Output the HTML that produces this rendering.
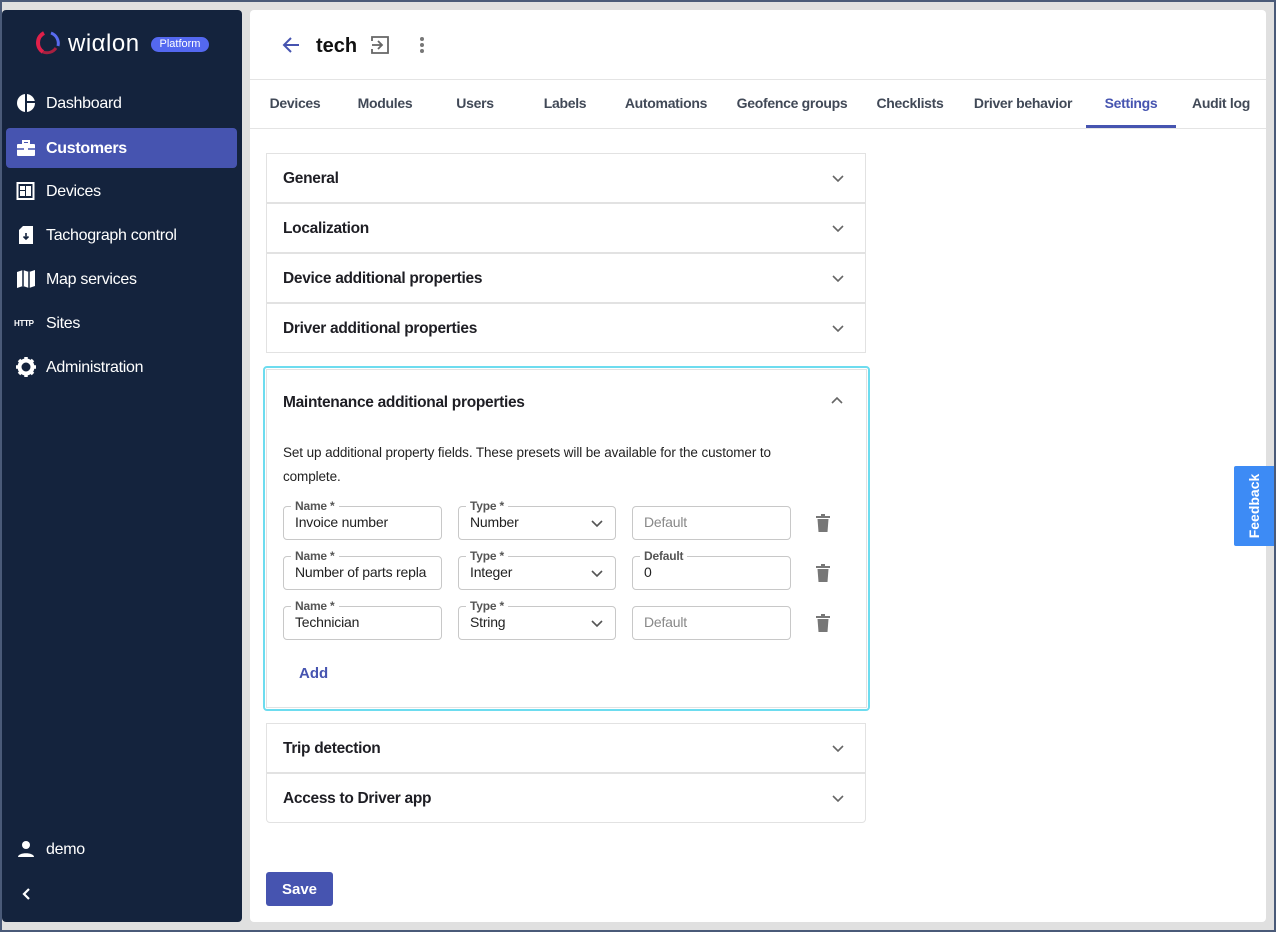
<!DOCTYPE html>
<html><head><meta charset="utf-8"><style>
*{box-sizing:border-box;margin:0;padding:0}
body{width:1276px;height:932px;background:#4a5a78;font-family:"Liberation Sans",sans-serif;position:relative;overflow:hidden}
.frame{position:absolute;left:2px;top:2px;width:1272px;height:928px;background:#e0e0e0}
.side{position:absolute;left:2px;top:10px;width:240px;height:912px;background:#14233d;border-radius:4px;color:#fff}
.nav{position:absolute;left:4px;width:231px;height:40px;font-size:16px;letter-spacing:-0.3px;display:flex;align-items:center;padding-left:40px;padding-top:2px}
.nav svg{position:absolute;left:10px;top:10px}
.act{background:#4654b0;border-radius:4px;font-weight:bold}
.main{position:absolute;left:250px;top:10px;width:1016px;height:912px;background:#fff;border-radius:4px}
.abs{position:absolute}
.tab{position:absolute;top:85px;font-size:14px;font-weight:bold;color:#414957;transform:translateX(-50%);white-space:nowrap;letter-spacing:-0.3px}
.acc{position:absolute;left:16px;width:600px;height:50px;border:1px solid #e2e2e2;background:#fff}
.acc span{position:absolute;left:16px;top:16px;font-size:15.5px;font-weight:bold;color:#1e1e24;letter-spacing:-0.3px}
.chev{position:absolute;right:20px;top:17px}
.fld{position:absolute;height:34px;border:1px solid #c8c8c8;border-radius:4px;font-size:14px;color:#222;padding:7px 11px;white-space:nowrap;overflow:hidden;letter-spacing:-0.2px}
.lbl{position:absolute;font-size:12px;font-weight:bold;color:#555;background:#fff;padding:0 4px;letter-spacing:-0.2px}
.ph{color:#888}
</style></head><body>
<div class="frame"></div>
<div class="side">
 <svg class="abs" style="left:32px;top:20px" width="30" height="26" viewBox="0 0 30 26"><path d="M10 3 A11 11 0 0 0 9 22" stroke="#e0204a" stroke-width="4" fill="none"/><path d="M9 22 A11 11 0 0 0 22 18" stroke="#a82040" stroke-width="3" fill="none"/><path d="M17 3 A11 11 0 0 1 24 16" stroke="#5a6cf0" stroke-width="3" fill="none"/></svg>
 <div class="abs" style="left:66px;top:20px;font-size:24px;color:#fff;letter-spacing:0.5px">wiαlon</div>
 <div class="abs" style="left:149px;top:27px;width:58px;height:15px;border-radius:8px;background:#5468f0;color:#fff;font-size:11px;text-align:center;line-height:15px">Platform</div>
 <div class="nav" style="top:73px"><svg width="20" height="20" viewBox="0 0 20 20"><circle cx="10" cy="10" r="9" fill="#fff"/><path d="M10 1v18M10 9h9" stroke="#14233d" stroke-width="2"/></svg>Dashboard</div>
 <div class="nav act" style="top:118px"><svg width="20" height="20" viewBox="0 0 20 20"><path d="M7 3h6v3h-6z" fill="none" stroke="#fff" stroke-width="2"/><rect x="1" y="6" width="18" height="12" rx="1" fill="#fff"/><path d="M1 11h18" stroke="#4654b0" stroke-width="1.5"/><rect x="8" y="9.5" width="4" height="3" fill="#fff"/></svg>Customers</div>
 <div class="nav" style="top:161px"><svg width="20" height="20" viewBox="0 0 20 20"><rect x="1.5" y="2" width="16" height="16" fill="none" stroke="#fff" stroke-width="2"/><rect x="4" y="5" width="5" height="4" fill="#fff"/><rect x="4" y="10" width="5" height="5" fill="#fff"/><rect x="10" y="5" width="5" height="10" fill="#fff"/></svg>Devices</div>
 <div class="nav" style="top:205px"><svg width="20" height="20" viewBox="0 0 20 20"><path d="M7 1h10v18H3V5z" fill="#fff"/><path d="M10 8v6M7.5 11.5l2.5 2.5 2.5-2.5" stroke="#14233d" stroke-width="1.6" fill="none"/></svg>Tachograph control</div>
 <div class="nav" style="top:249px"><svg width="20" height="20" viewBox="0 0 20 20"><path d="M1 3l6-2 6 2 6-2v16l-6 2-6-2-6 2z" fill="#fff"/><path d="M7 1v16M13 3v16" stroke="#14233d" stroke-width="1.5"/></svg>Map services</div>
 <div class="nav" style="top:293px"><span class="abs" style="left:8px;top:16px;font-size:8px;font-weight:bold">HTTP</span>Sites</div>
 <div class="nav" style="top:337px"><svg width="20" height="20" viewBox="0 0 20 20"><circle cx="10" cy="10" r="6.5" fill="none" stroke="#fff" stroke-width="4"/><path d="M10 0v5M10 15v5M0 10h5M15 10h5M3 3l3.5 3.5M13.5 13.5L17 17M17 3l-3.5 3.5M6.5 13.5L3 17" stroke="#fff" stroke-width="3.5"/><circle cx="10" cy="10" r="2.5" fill="#14233d"/></svg>Administration</div>
 <div class="nav" style="top:819px"><svg width="20" height="20" viewBox="0 0 20 20"><circle cx="10" cy="6" r="4" fill="#fff"/><path d="M2 18c0-5 16-5 16 0z" fill="#fff"/></svg>demo</div>
 <svg class="abs" style="left:18px;top:877px" width="14" height="14" viewBox="0 0 14 14"><path d="M9 2L4 7l5 5" stroke="#fff" stroke-width="2.2" fill="none"/></svg>
</div>
<div class="main">
 <svg class="abs" style="left:32px;top:26px" width="18" height="18" viewBox="0 0 18 18"><path d="M17 9H2M9 2L2 9l7 7" stroke="#4654b0" stroke-width="2" fill="none"/></svg>
 <div class="abs" style="left:66px;top:25px;font-size:20px;font-weight:bold;color:#111">tech</div>
 <svg class="abs" style="left:120px;top:25px" width="20" height="20" viewBox="0 0 20 20"><path d="M2 6V2h16v16H2v-4" stroke="#666" stroke-width="1.8" fill="none"/><path d="M2 10h10M8 6l4 4-4 4" stroke="#666" stroke-width="1.8" fill="none"/></svg>
 <svg class="abs" style="left:168px;top:26px" width="8" height="20"><circle cx="4" cy="3" r="2" fill="#777"/><circle cx="4" cy="9" r="2" fill="#777"/><circle cx="4" cy="15" r="2" fill="#777"/></svg>
 <div class="abs" style="left:0;top:69px;width:1016px;height:1px;background:#e4e4e4"></div>
 <div class="abs" style="left:0;top:118px;width:1016px;height:1px;background:#e4e4e4"></div>
 <div class="tab" style="left:45px">Devices</div>
 <div class="tab" style="left:135px">Modules</div>
 <div class="tab" style="left:225px">Users</div>
 <div class="tab" style="left:315px">Labels</div>
 <div class="tab" style="left:416px">Automations</div>
 <div class="tab" style="left:542px">Geofence groups</div>
 <div class="tab" style="left:660px">Checklists</div>
 <div class="tab" style="left:773px">Driver behavior</div>
 <div class="tab" style="left:881px;color:#4654b0">Settings</div>
 <div class="tab" style="left:971px">Audit log</div>
 <div class="abs" style="left:836px;top:115px;width:90px;height:3px;background:#4654b0"></div>

 <div class="acc" style="top:143px"><span>General</span><svg class="chev" width="14" height="14" viewBox="0 0 14 14"><path d="M2 5l5 5 5-5" stroke="#666" stroke-width="1.6" fill="none"/></svg></div>
 <div class="acc" style="top:193px"><span>Localization</span><svg class="chev" width="14" height="14" viewBox="0 0 14 14"><path d="M2 5l5 5 5-5" stroke="#666" stroke-width="1.6" fill="none"/></svg></div>
 <div class="acc" style="top:243px"><span>Device additional properties</span><svg class="chev" width="14" height="14" viewBox="0 0 14 14"><path d="M2 5l5 5 5-5" stroke="#666" stroke-width="1.6" fill="none"/></svg></div>
 <div class="acc" style="top:293px"><span>Driver additional properties</span><svg class="chev" width="14" height="14" viewBox="0 0 14 14"><path d="M2 5l5 5 5-5" stroke="#666" stroke-width="1.6" fill="none"/></svg></div>

 <div class="abs" style="left:13px;top:356px;width:607px;height:345px;border:2px solid #6ddcef;border-radius:4px"></div>
 <div class="abs" style="left:16px;top:359px;width:601px;height:339px;border:1px solid #e2e2e2"></div>
 <div class="abs" style="left:33px;top:384px;font-size:15.5px;font-weight:bold;color:#1e1e24;letter-spacing:-0.3px">Maintenance additional properties</div>
 <svg class="abs" style="left:580px;top:384px" width="14" height="14" viewBox="0 0 14 14"><path d="M2 9l5-5 5 5" stroke="#666" stroke-width="1.6" fill="none"/></svg>
 <div class="abs" style="left:33px;top:431px;width:525px;font-size:13.5px;line-height:24px;color:#222;letter-spacing:-0.1px">Set up additional property fields. These presets will be available for the customer to complete.</div>

 <div class="fld" style="left:33px;top:496px;width:159px">Invoice number</div><div class="lbl" style="left:41px;top:489px">Name *</div>
 <div class="fld" style="left:208px;top:496px;width:158px">Number</div><div class="lbl" style="left:216px;top:489px">Type *</div>
 <svg class="abs" style="left:340px;top:506px" width="14" height="14" viewBox="0 0 14 14"><path d="M2 5l5 5 5-5" stroke="#555" stroke-width="1.6" fill="none"/></svg>
 <div class="fld ph" style="left:382px;top:496px;width:159px">Default</div>
 <svg class="abs" style="left:566px;top:504px" width="14" height="18" viewBox="0 0 14 18"><rect x="0" y="2" width="14" height="2" fill="#777"/><rect x="5" y="0" width="4" height="2" fill="#777"/><path d="M1.5 5h11l-1 13h-9z" fill="#777"/></svg>

 <div class="fld" style="left:33px;top:546px;width:159px">Number of parts repla</div><div class="lbl" style="left:41px;top:539px">Name *</div>
 <div class="fld" style="left:208px;top:546px;width:158px">Integer</div><div class="lbl" style="left:216px;top:539px">Type *</div>
 <svg class="abs" style="left:340px;top:556px" width="14" height="14" viewBox="0 0 14 14"><path d="M2 5l5 5 5-5" stroke="#555" stroke-width="1.6" fill="none"/></svg>
 <div class="fld" style="left:382px;top:546px;width:159px">0</div><div class="lbl" style="left:390px;top:539px">Default</div>
 <svg class="abs" style="left:566px;top:554px" width="14" height="18" viewBox="0 0 14 18"><rect x="0" y="2" width="14" height="2" fill="#777"/><rect x="5" y="0" width="4" height="2" fill="#777"/><path d="M1.5 5h11l-1 13h-9z" fill="#777"/></svg>

 <div class="fld" style="left:33px;top:596px;width:159px">Technician</div><div class="lbl" style="left:41px;top:589px">Name *</div>
 <div class="fld" style="left:208px;top:596px;width:158px">String</div><div class="lbl" style="left:216px;top:589px">Type *</div>
 <svg class="abs" style="left:340px;top:606px" width="14" height="14" viewBox="0 0 14 14"><path d="M2 5l5 5 5-5" stroke="#555" stroke-width="1.6" fill="none"/></svg>
 <div class="fld ph" style="left:382px;top:596px;width:159px">Default</div>
 <svg class="abs" style="left:566px;top:604px" width="14" height="18" viewBox="0 0 14 18"><rect x="0" y="2" width="14" height="2" fill="#777"/><rect x="5" y="0" width="4" height="2" fill="#777"/><path d="M1.5 5h11l-1 13h-9z" fill="#777"/></svg>

 <div class="abs" style="left:49px;top:655px;font-size:15px;font-weight:bold;color:#4654b0">Add</div>

 <div class="acc" style="top:713px"><span>Trip detection</span><svg class="chev" width="14" height="14" viewBox="0 0 14 14"><path d="M2 5l5 5 5-5" stroke="#666" stroke-width="1.6" fill="none"/></svg></div>
 <div class="acc" style="top:763px;border-radius:0 0 4px 4px"><span>Access to Driver app</span><svg class="chev" width="14" height="14" viewBox="0 0 14 14"><path d="M2 5l5 5 5-5" stroke="#666" stroke-width="1.6" fill="none"/></svg></div>

 <div class="abs" style="left:16px;top:862px;width:67px;height:34px;background:#4654b0;border-radius:3px;color:#fff;font-size:15px;font-weight:bold;text-align:center;line-height:35px">Save</div>
</div>
<div class="abs" style="left:1234px;top:466px;width:40px;height:80px;background:#3d8bf5;border-radius:2px 0 0 2px"><div style="position:absolute;left:20px;top:40px;transform:translate(-50%,-50%) rotate(-90deg);color:#fff;font-size:14px;font-weight:bold;white-space:nowrap">Feedback</div></div>
</body></html>
